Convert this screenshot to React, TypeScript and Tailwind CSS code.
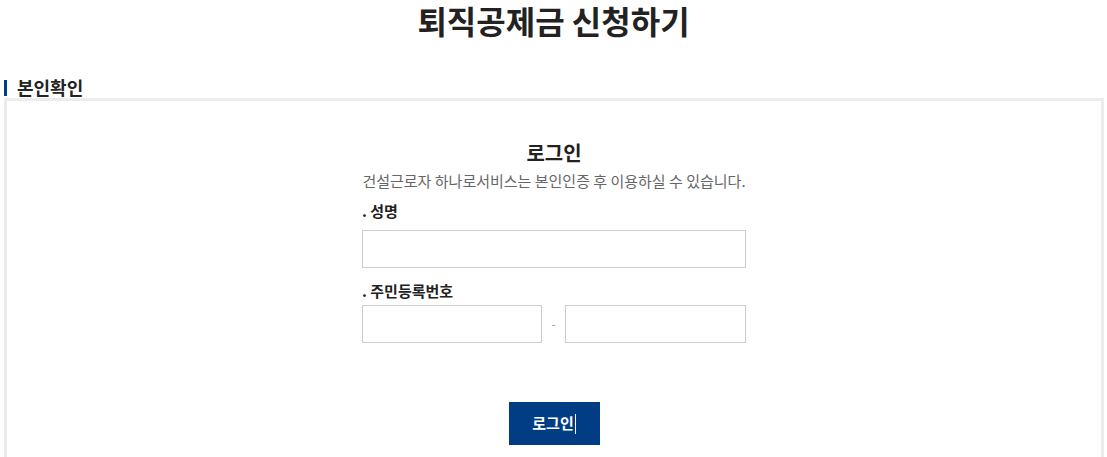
import React from "react";

export default function App() {
  const font = { fontFamily: '"Noto Sans CJK KR", "Noto Sans", sans-serif' };
  return (
    <div className="w-[1107px] h-[457px] overflow-hidden bg-white text-[#222]" style={font}>
      <h1 className="text-center text-[32px] font-bold leading-[40px] text-[#222]">
        퇴직공제금 신청하기
      </h1>
      <div className="mt-[38px] flex items-center h-[19px] pl-[4px]">
        <span className="w-[3px] h-[16px] bg-[#003d85]" />
        <span className="ml-[10px] text-[18px] font-bold leading-[19px] text-[#222]">본인확인</span>
      </div>
      <div className="mx-[4px] mt-[1px] border-[3px] border-[#ececec] h-[400px] w-[1100px]">
        <div className="w-[384px] mx-auto pt-[39px]">
          <div className="text-center text-[20px] font-bold leading-[26px] text-[#222]">로그인</div>
          <div className="text-center text-[15px] leading-[22px] mt-[4px] text-[#666] whitespace-nowrap">
            건설근로자 하나로서비스는 본인인증 후 이용하실 수 있습니다.
          </div>
          <div className="mt-[9px] text-[15px] font-bold leading-[20px] text-[#222]">. 성명</div>
          <div className="mt-[9px] h-[38px] border border-[#cccccc] bg-white" />
          <div className="mt-[13px] text-[15px] font-bold leading-[20px] text-[#222]">. 주민등록번호</div>
          <div className="mt-[4px] flex items-center">
            <div className="w-[180px] h-[38px] border border-[#cccccc]" />
            <div className="flex-1 text-center text-[12px] text-[#999]">-</div>
            <div className="w-[181px] h-[38px] border border-[#cccccc]" />
          </div>
          <div className="mt-[59px] flex justify-center">
            <button className="w-[91px] h-[43px] bg-[#003d85] text-white text-[15px] font-bold flex items-center justify-center">
              로그인<span className="w-px h-[20px] bg-white ml-[1px]" />
            </button>
          </div>
        </div>
      </div>
    </div>
  );
}
